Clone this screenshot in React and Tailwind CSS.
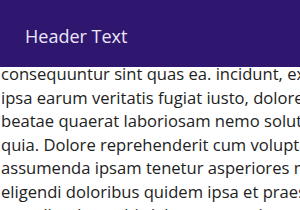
import React from "react";

const lines = [
  "consequuntur sint quas ea. incidunt, ex rerum",
  "ipsa earum veritatis fugiat iusto, dolore quas",
  "beatae quaerat laboriosam nemo soluta ipsa",
  "quia. Dolore reprehenderit cum voluptate sint",
  "assumenda ipsam tenetur asperiores maxime",
  "eligendi doloribus quidem ipsa et praesentium",
  "repudiandae nobis laborum sequi quae dolor",
];

export default function App() {
  return (
    <div className="w-[300px] h-[210px] overflow-hidden bg-white flex flex-col" style={{ fontFamily: '"Open Sans", "Noto Sans", sans-serif' }}>
      <div className="h-[67px] shrink-0 bg-[#2f1770] flex items-center pl-[25px] pt-[4px]">
        <span className="text-[18px] text-[#ece6f8] leading-none">Header Text</span>
      </div>
      <div className="flex-1 overflow-hidden">
        <div className="-mt-[5px] pl-[1px] text-[16.6px] leading-[23.5px] text-[#222]">
          {lines.map((l) => (
            <div key={l} className="whitespace-nowrap">{l}</div>
          ))}
        </div>
      </div>
    </div>
  );
}
